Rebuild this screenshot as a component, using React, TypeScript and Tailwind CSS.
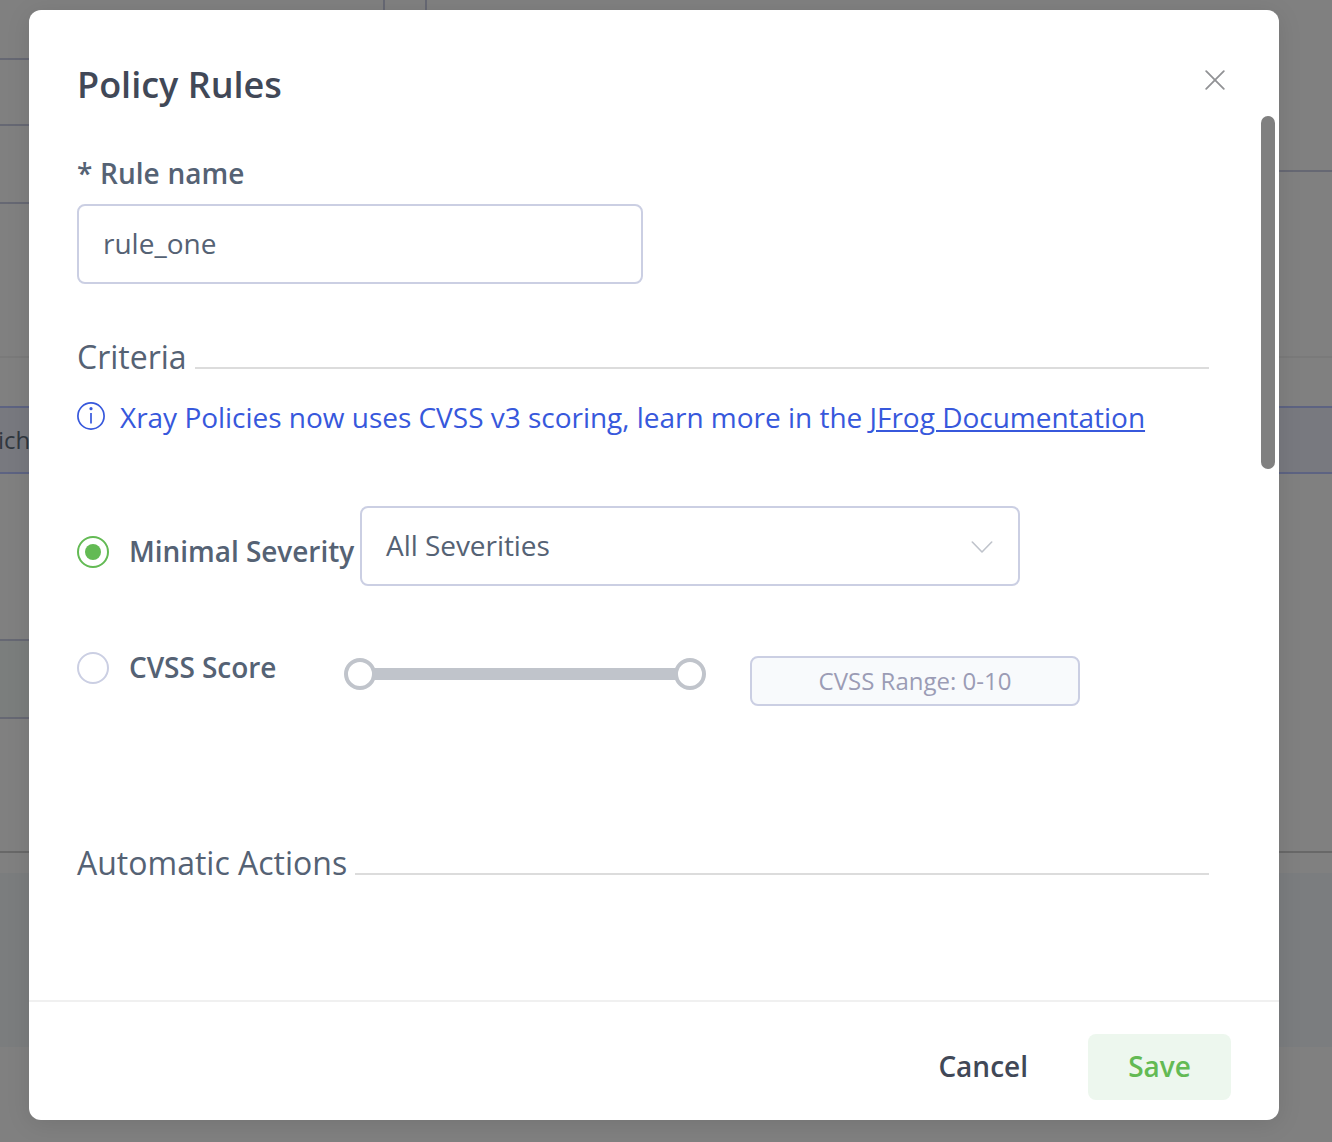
import React from "react";

function SectionHeading({ children }: { children: React.ReactNode }) {
  return (
    <div className="flex h-11 items-center text-[32px] leading-[44px] text-[#556274]">
      <h2 className="-mt-px shrink-0">{children}</h2>
      <span className="ml-2 mt-[22px] h-0.5 flex-1 bg-[#dcdcdc]" />
    </div>
  );
}

function Backdrop() {
  return (
    <div className="flex h-full w-full bg-[#808080]">
      <div className="flex w-[29px] flex-col overflow-hidden">
        <div className="mt-[58px] h-0.5 shrink-0 bg-[#666873]" />
        <div className="mt-16 h-0.5 shrink-0 bg-[#666873]" />
        <div className="mt-[76px] h-0.5 shrink-0 bg-[#666873]" />
        <div className="mt-[152px] h-0.5 shrink-0 bg-[#7a7a7a]" />
        <div className="mt-12 flex h-[68px] shrink-0 items-center border-y-2 border-[#5d6382] bg-[#78797f]">
          <span className="-ml-0.5 text-[24px] leading-none text-[#30373f]">ich</span>
        </div>
        <div className="mt-[165px] h-20 shrink-0 border-y-2 border-[#666873] bg-[#7b7e7d]" />
        <div className="mt-[132px] h-0.5 shrink-0 bg-[#686868]" />
        <div className="mt-5 h-[174px] shrink-0 bg-[#7b7d7e]" />
      </div>
      <div className="flex h-2.5 flex-1">
        <div className="ml-[354px] w-11 border-x-2 border-[#666873]" />
      </div>
      <div className="flex w-[53px] flex-col">
        <div className="mt-[170px] h-0.5 shrink-0 bg-[#666873]" />
        <div className="mt-[184px] h-0.5 shrink-0 bg-[#7a7a7a]" />
        <div className="mt-12 h-[68px] shrink-0 border-y-2 border-[#5d6382] bg-[#78797f]" />
        <div className="mt-[377px] h-0.5 shrink-0 bg-[#686868]" />
        <div className="mt-5 h-[174px] shrink-0 bg-[#7b7d7f]" />
      </div>
    </div>
  );
}

export default function App() {
  return (
    <div className="relative h-[1142px] w-[1332px] overflow-hidden font-['Open_Sans',sans-serif] text-[28px] leading-[38px] text-[#556274]">
      <Backdrop />
      <div
        role="dialog"
        className="absolute left-[29px] top-2.5 flex h-[1110px] w-[1250px] flex-col overflow-hidden rounded-xl bg-white shadow-[0_4px_24px_rgba(0,0,0,0.1)]"
      >
        <header className="flex h-[106px] shrink-0 items-start justify-between pl-12 pr-[54px]">
          <h1 className="mt-[50px] text-[36px] font-semibold leading-[50px] text-[#414857]">Policy Rules</h1>
          <button aria-label="Close" className="mt-[60px]">
            <svg width="20" height="20" viewBox="0 0 20 20" fill="none" stroke="#919295" strokeWidth="1.8" strokeLinecap="round">
              <path d="M1.2 1.2 18.8 18.8M18.8 1.2 1.2 18.8" />
            </svg>
          </button>
        </header>

        <div className="flex min-h-0 flex-1 justify-between pl-12 pr-1">
          <div className="w-[1132px]">
            <label className="mt-[38px] block font-semibold [word-spacing:0.5px]">* Rule name</label>
            <div className="mt-3 flex h-20 w-[566px] items-center rounded-lg border-2 border-[#cbcfe3] px-6 pb-0.5">
              rule_one
            </div>

            <div className="mt-[51px]">
              <SectionHeading>Criteria</SectionHeading>
            </div>

            <div className="mt-[19px] flex items-center text-[#3758dc]">
              <svg className="-mt-0.5 mr-[15px]" width="28" height="28" viewBox="0 0 28 28" fill="none" stroke="#3758dc" strokeWidth="1.7">
                <circle cx="14" cy="14" r="13.1" />
                <path d="M14 11v10.5" />
                <circle cx="14" cy="6.7" r="1.6" fill="#3758dc" stroke="none" />
              </svg>
              <p className="whitespace-nowrap tracking-[-0.02px]">
                Xray Policies now uses CVSS v3 scoring, learn more in the{" "}
                <a className="underline decoration-2 underline-offset-2">JFrog Documentation</a>
              </p>
            </div>

            <div className="mt-[70px] flex h-20 items-center">
              <span className="mt-3 flex size-8 shrink-0 items-center justify-center rounded-full border-2 border-[#63ba54]">
                <span className="size-4 rounded-full bg-[#63ba54]" />
              </span>
              <span className="ml-5 mt-2.5 w-[231px] shrink-0 whitespace-nowrap font-semibold tracking-[-0.04px]">Minimal Severity</span>
              <div className="flex h-20 w-[660px] items-center justify-between rounded-lg border-2 border-[#cbcfe3] pl-6 pr-[25px]">
                <span className="-mt-0.5 tracking-[-0.05px]">All Severities</span>
                <svg className="mt-px" width="22" height="12" viewBox="0 0 22 12" fill="none" stroke="#bfc3cb" strokeWidth="1.6" strokeLinecap="round" strokeLinejoin="round">
                  <path d="m1.3 1 9.7 10 9.7-10" />
                </svg>
              </div>
            </div>

            <div className="mt-[66px] flex h-[54px] items-start">
              <span className="size-8 shrink-0 rounded-full border-2 border-[#cbcfe3]" />
              <span className="-mt-1 ml-5 w-[215px] shrink-0 font-semibold tracking-[-0.06px]">CVSS Score</span>
              <div className="mt-1.5 flex w-[362px] items-center">
                <span className="size-8 shrink-0 rounded-full border-4 border-[#c0c4cb]" />
                <span className="-mx-0.5 h-3 flex-1 bg-[#c0c4cb]" />
                <span className="size-8 shrink-0 rounded-full border-4 border-[#c0c4cb]" />
              </div>
              <div className="ml-11 mt-1 flex h-[50px] w-[330px] items-center justify-center rounded-lg border-2 border-[#cbcfe3] bg-[#f8fafc] text-[24px] text-[#9b9cb5]">
                CVSS Range: 0-10
              </div>
            </div>

            <div className="mt-[135px]">
              <SectionHeading>Automatic Actions</SectionHeading>
            </div>
          </div>
          <div className="h-[353px] w-3.5 rounded-full bg-[#808080]" />
        </div>

        <footer className="flex h-[120px] shrink-0 items-start justify-end border-t-2 border-[#f0f0f0] pr-12 pt-8 font-semibold">
          <button className="mr-[60px] h-[66px] pb-0.5 text-[#414857]">Cancel</button>
          <button className="h-[66px] w-[143px] rounded-lg bg-[#edf7ee] pb-0.5 text-[#63ba54]">Save</button>
        </footer>
      </div>
    </div>
  );
}
